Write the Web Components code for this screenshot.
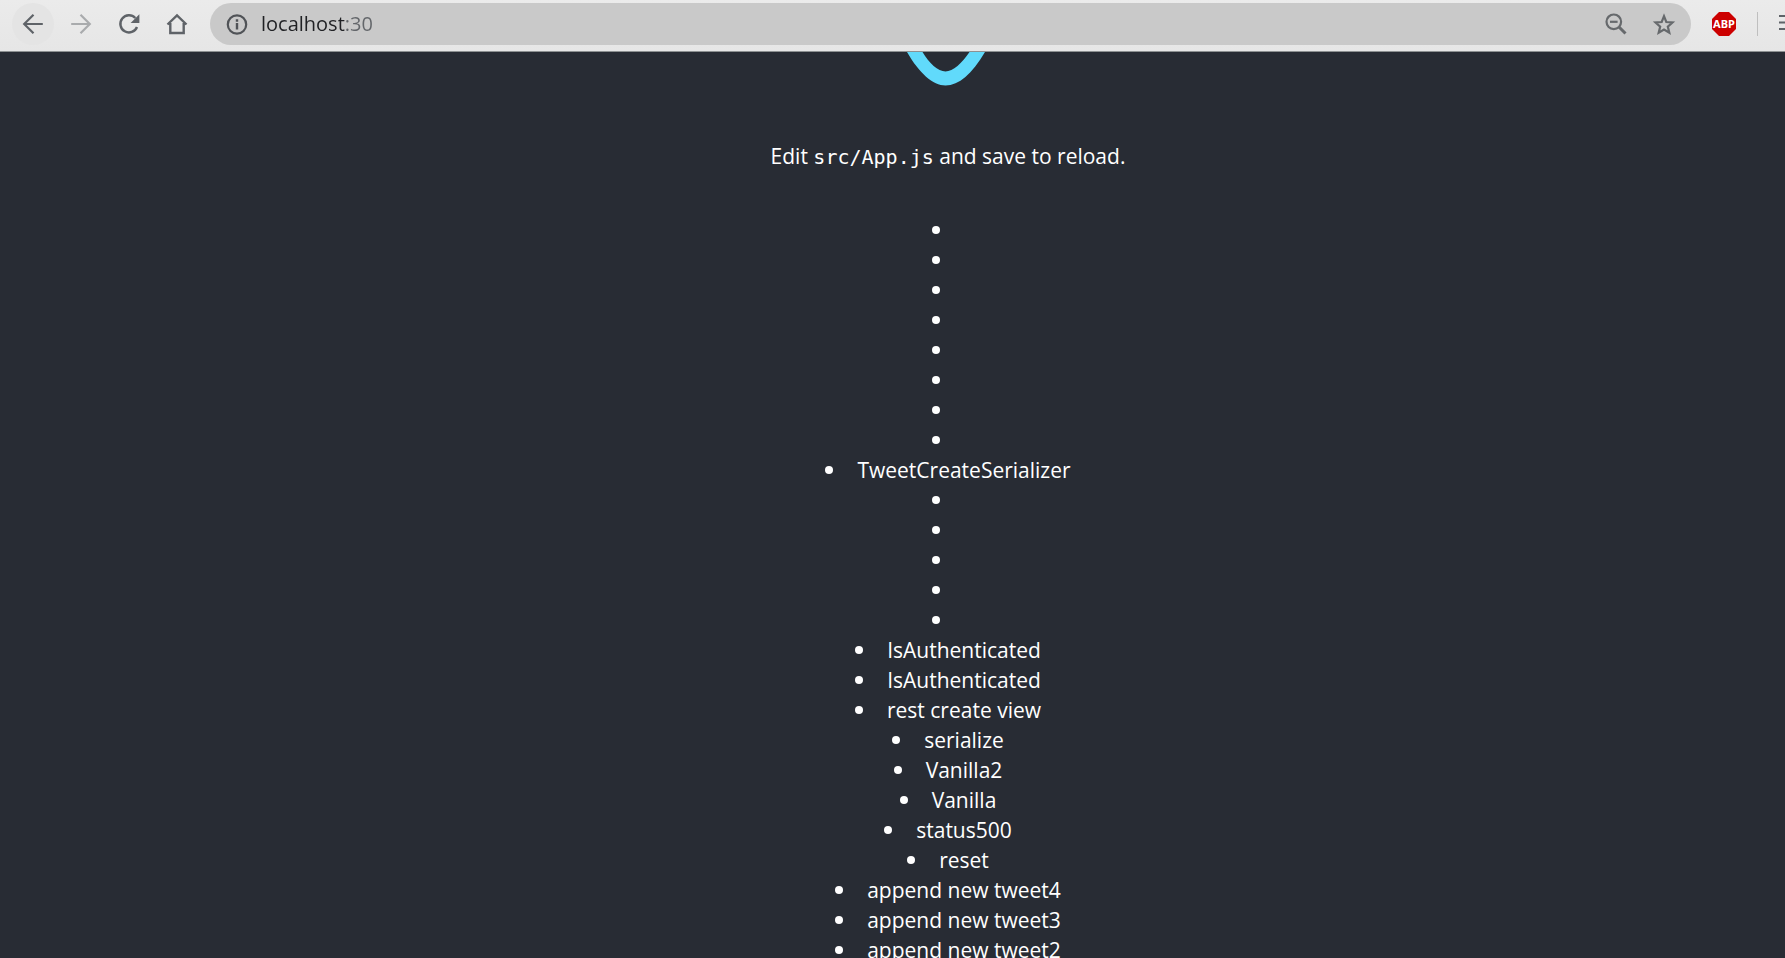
<!DOCTYPE html>
<html lang="en">
<head>
<meta charset="utf-8">
<title>React App</title>
<style>
html, body { height: 100%; margin: 0; }
body { background: #282c34; overflow: hidden; font-family: "Open Sans", "Noto Sans", sans-serif; }
</style>
</head>
<body>
<browser-window>
  <browser-toolbar slot="toolbar"></browser-toolbar>
  <react-app></react-app>
</browser-window>

<template id="window-template">
  <style>
    :host { display: flex; flex-direction: column; height: 100vh; overflow: hidden; }
    main { flex: 1; min-height: 0; overflow: hidden; }
  </style>
  <slot name="toolbar"></slot>
  <main><slot></slot></main>
</template>

<template id="toolbar-template">
  <style>
    :host { display: block; background: linear-gradient(#ebebeb, #e6e6e6); border-bottom: 1px solid #8d9192; }
    nav { display: flex; align-items: center; height: 48px; padding: 0 0 3px 12px; }
    .nav { display: flex; gap: 6px; margin-right: 12px; }
    .divider { width: 1px; height: 24px; background: #bfbfbf; margin: 0 21px; }
    .abp { margin-left: 21px; }
  </style>
  <nav aria-label="Browser">
    <div class="nav">
      <tool-button label="Back" class="on"><svg width="24" height="24" viewBox="0 0 24 24" fill="none" stroke="#5f6368" stroke-width="2.200"><path d="M21.800 12H3M12.500 2.800L3.200 12l9.300 9.200"/></svg></tool-button>
      <tool-button label="Forward"><svg width="24" height="24" viewBox="0 0 24 24" fill="none" stroke="#a9abad" stroke-width="2.200"><path d="M2.200 12H21M11.500 2.800l9.300 9.200-9.300 9.200"/></svg></tool-button>
      <tool-button label="Reload"><svg width="24" height="24" viewBox="0 0 24 24"><path d="M20 15A8.600 8.600 0 1 1 18.300 6" fill="none" stroke="#5f6368" stroke-width="2.400"/><path d="M22.400 2.200V11h-8.800z" fill="#5f6368"/></svg></tool-button>
      <tool-button label="Home"><svg width="24" height="24" viewBox="0 0 24 24" fill="none" stroke="#5f6368" stroke-width="2.400"><path d="M2.500 12.500L12 3.300l9.500 9.200M5.300 11v10h13.400V11"/></svg></tool-button>
    </div>
    <address-bar></address-bar>
    <tool-button class="abp small" label="Adblock Plus"><svg width="24" height="24" viewBox="0 0 24 24"><path d="M7 0h10l7 7v10l-7 7H7l-7-7V7z" fill="#cc0000"/><text x="12" y="16" text-anchor="middle" font-family="Noto Sans" font-size="11" font-weight="700" fill="#fff">ABP</text></svg></tool-button>
    <div class="divider"></div>
    <tool-button class="edge" label="Reading list"><svg width="24" height="24" viewBox="0 0 24 24" stroke="#5f6368" stroke-width="2"><path d="M0 4h18M0 10.500h18M0 17h12"/></svg></tool-button>
  </nav>
</template>

<template id="button-template">
  <style>
    :host { display: block; flex: none; }
    button { display: flex; align-items: center; justify-content: center; width: 42px; height: 42px; padding: 0; border: 0; border-radius: 50%; background: none; }
    :host(.on) button { background: #e4e4e4; }
    :host(.small) button { width: 24px; border-radius: 0; }
    :host(.edge) button { width: 6px; border-radius: 0; justify-content: flex-start; overflow: hidden; }
    ::slotted(svg) { display: block; flex: none; }
  </style>
  <button type="button"><slot></slot></button>
</template>

<template id="address-template">
  <style>
    :host { display: flex; align-items: center; flex: 1; min-width: 0; height: 42px; border-radius: 21px; background: #c9c9c9; }
    .info { display: block; flex: none; margin: 0 12px 0 15px; }
    input { flex: 1; min-width: 0; height: 30px; padding: 0; border: 0; outline: 0; font: 20px/30px "Open Sans", "Noto Sans", sans-serif; color: #202124;
      background: linear-gradient(90deg, #202124 85px, #63666a 85px) text; -webkit-background-clip: text; -webkit-text-fill-color: transparent; }
    .actions { display: flex; gap: 6px; margin-right: 6px; }
  </style>
  <svg class="info" width="24" height="24" viewBox="0 0 24 24"><circle cx="12" cy="12.500" r="9.200" fill="none" stroke="#505357" stroke-width="2.200"/><path d="M12 11v6.500M12 7.300v2.400" stroke="#505357" stroke-width="2.400"/></svg>
  <input type="text" aria-label="Address" value="localhost:30" spellcheck="false">
  <div class="actions">
    <tool-button label="Zoom"><svg width="24" height="24" viewBox="0 0 24 24" fill="none" stroke="#66696c" stroke-width="2.200"><circle cx="9.800" cy="9.800" r="7.300"/><path d="M6 9.800h7.600"/><path d="M15 15l6.500 6.500" stroke-width="3"/></svg></tool-button>
    <tool-button label="Bookmark"><svg width="24" height="24" viewBox="0 0 24 24" fill="none" stroke="#66696c" stroke-width="2.200"><path d="M12 4.200l2.300 5.800 6.200.5-4.700 4.100 1.500 6.100L12 17.500l-5.300 3.200 1.500-6.100-4.700-4.100 6.200-.5z"/></svg></tool-button>
  </div>
</template>

<template id="app-template">
  <style>
    :host { display: flex; flex-direction: column; align-items: center; padding-left: 111px; color: #fff; font-size: 21px; line-height: 30px; }
    svg { display: block; flex: none; }
    p { margin: 55px 0 43px; }
    code { font: 20px/30px "DejaVu Sans Mono", monospace; }
    tweet-list { align-self: stretch; }
  </style>
  <svg width="96" height="34" viewBox="0 0 96 34" role="img" aria-label="logo"><path d="M7 0C19 21 33 33.500 45.500 33.500C59 33.500 72 22 85 0H69.500C62 11 53 19.500 45.500 19.500C38 19.500 29 11 22.500 0Z" fill="#61dafb"/></svg>
  <p>Edit <code>src/App.js</code> and save to reload.</p>
  <tweet-list></tweet-list>
</template>

<template id="list-template">
  <style>
    :host { display: block; }
    ul { list-style: none; margin: 0; padding: 0; }
    li { display: flex; align-items: center; justify-content: center; height: 30px; }
    li::before { content: ""; flex: none; width: 8px; height: 8px; margin-right: 24px; border-radius: 50%; background: #fff; }
  </style>
  <ul></ul>
</template>

<script>
function define(name, templateId, setup) {
  customElements.define(name, class extends HTMLElement {
    constructor() {
      super();
      this.attachShadow({ mode: 'open' }).append(document.getElementById(templateId).content.cloneNode(true));
    }
    connectedCallback() { if (setup) setup(this); }
  });
}
const tweets = ['', '', '', '', '', '', '', '', 'TweetCreateSerializer', '', '', '', '', '',
  'IsAuthenticated', 'IsAuthenticated', 'rest create view', 'serialize', 'Vanilla2', 'Vanilla',
  'status500', 'reset', 'append new tweet4', 'append new tweet3', 'append new tweet2'];
define('tool-button', 'button-template', el =>
  el.shadowRoot.querySelector('button').setAttribute('aria-label', el.getAttribute('label')));
define('address-bar', 'address-template');
define('browser-toolbar', 'toolbar-template');
define('tweet-list', 'list-template', el =>
  el.shadowRoot.querySelector('ul').replaceChildren(...tweets.map(text => {
    const li = document.createElement('li');
    li.textContent = text;
    return li;
  })));
define('react-app', 'app-template');
define('browser-window', 'window-template');
</script>
</body>
</html>
